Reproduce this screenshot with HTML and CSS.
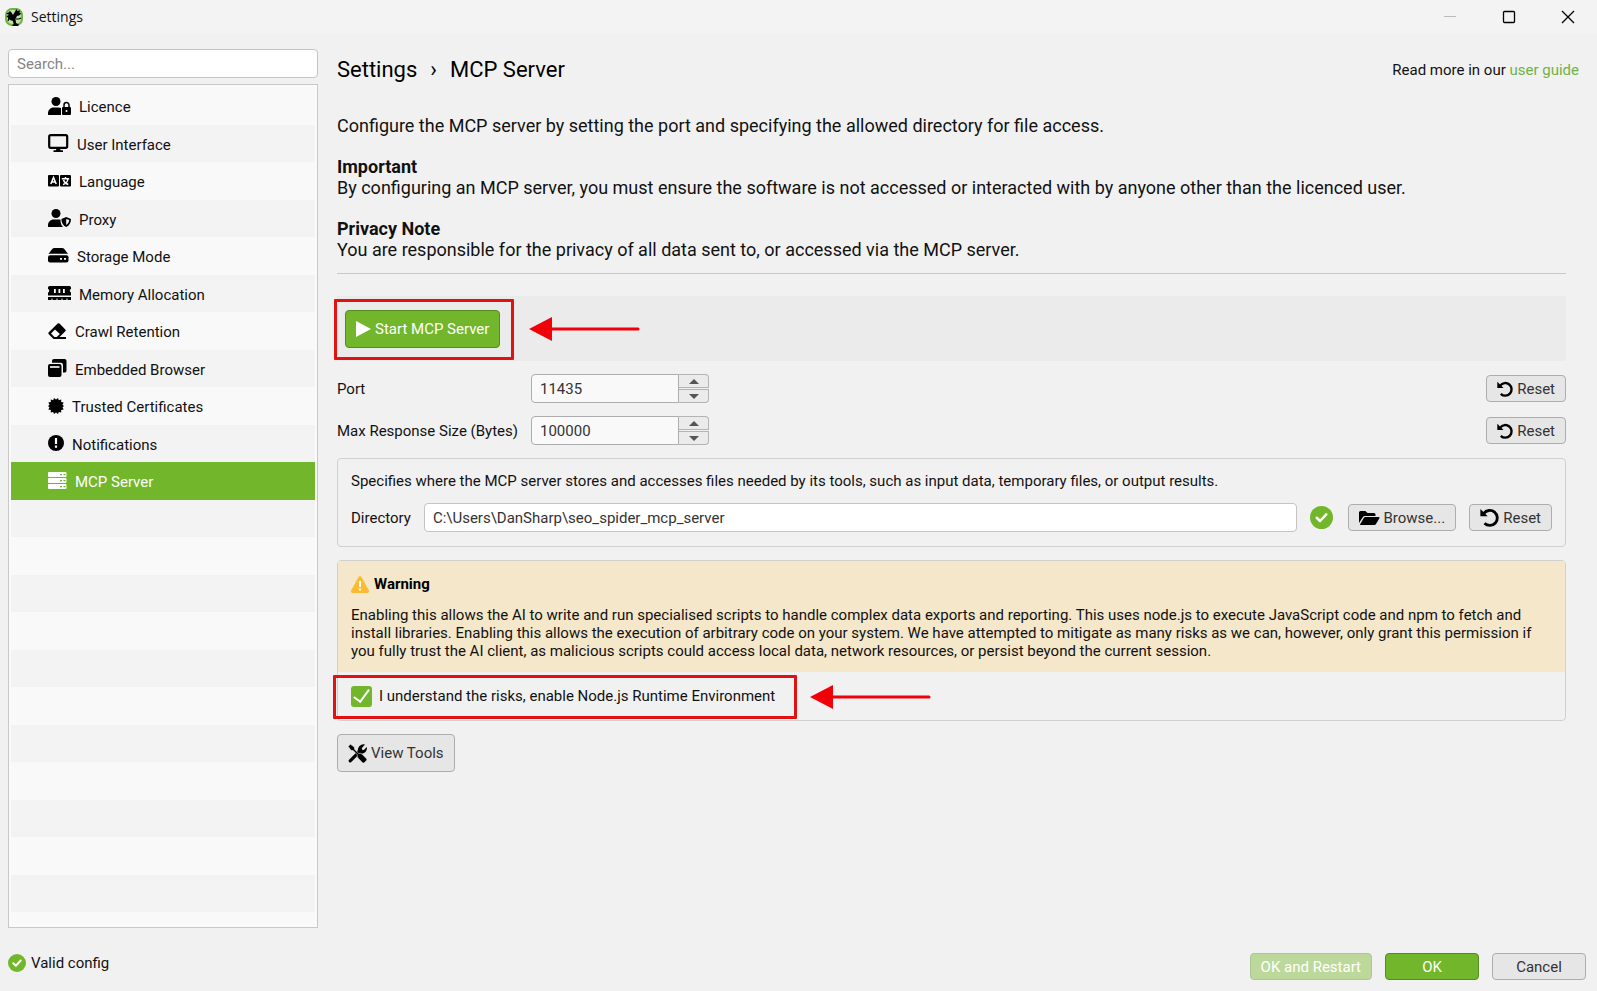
FILE: index.html
```html
<!DOCTYPE html>
<html lang="en">
<head>
  <meta charset="utf-8">
  <title>Settings</title>
  <link rel="stylesheet" href="styles.css">
</head>
<body>
  <svg class="sprite" aria-hidden="true">
    <symbol id="check" viewBox="0 0 512 512"><path fill="#72b62b" d="M256 512A256 256 0 1 0 256 0a256 256 0 1 0 0 512z"/><path fill="none" stroke="#fff" stroke-width="56" stroke-linecap="round" stroke-linejoin="round" d="M150 262l74 72L362 186"/></symbol>
    <symbol id="undo" viewBox="0 0 16 16"><path fill="none" stroke="currentColor" stroke-width="2.4" d="M3.2 4.6A6.3 6.3 0 1 1 3.8 12.8"/><path d="M.3.8v6.1h6.2z"/></symbol>
  </svg>

  <header class="titlebar">
    <svg class="app-icon" viewBox="0 0 18 18"><rect x="1" y="1" width="16" height="16" rx="6" fill="#c3dfae" stroke="#6cb33f" stroke-width="2"/><path d="M1 5.500l2.500-1L5 3l1.500 1.500L8 7l2-3.500 1.500-2.500 1 2L15 2.500l-.5 2.500 2 .5-2.500 2-2 .5-1.500 3L11 15l3 1.500-1 1.500H7l1.500-2-.5-3-3-1-2-2L1.500 8 4 7z"/><path fill="none" stroke="#000" stroke-width="1.200" d="M11 11l3 0 2-1M4 10l-1 3"/></svg>
    <span class="window-title">Settings</span>
    <div class="window-buttons">
      <button type="button" aria-label="Minimize" disabled><svg viewBox="0 0 14 14"><path stroke="#bbb" d="M1 6.500h12"/></svg></button>
      <button type="button" aria-label="Maximize"><svg viewBox="0 0 14 14"><rect x="1.500" y="1.500" width="11" height="11" rx="1" fill="none" stroke="#000" stroke-width="1.300"/></svg></button>
      <button type="button" aria-label="Close"><svg viewBox="0 0 14 14"><path stroke="#000" stroke-width="1.300" d="M1 1l12 12M13 1L1 13"/></svg></button>
    </div>
  </header>

  <div class="content">
    <aside class="sidebar">
      <input class="search" type="text" placeholder="Search..." aria-label="Search">
      <nav class="nav">
        <ul>
          <li><svg width="23" height="18" viewBox="0 0 23 18"><circle cx="8" cy="4.500" r="4.500"/><path d="M0 17.500V16c0-3 2.500-5.500 5.500-5.500h5c1 0 1.800.2 2.500.5v7H1q-1 0-1-.5z"/><rect x="14" y="10" width="9" height="8" rx="1"/><path fill="none" stroke="#000" stroke-width="1.500" d="M16 10V8a2.500 2.500 0 0 1 5 0v2"/><circle cx="18.500" cy="14" r="1" fill="#fff"/></svg>Licence</li>
          <li><svg width="21" height="18" viewBox="0 0 21 18"><rect x="1.200" y="1.200" width="18" height="12.600" rx="1.500" fill="none" stroke="#000" stroke-width="2.200"/><path d="M8.500 14h3.500l.5 2.200H15V18H5.500v-1.800H8z"/></svg>User Interface</li>
          <li><svg width="23" height="12" viewBox="0 0 23 12"><rect width="11" height="11.500" rx="1"/><rect x="12" width="11" height="11.500" rx="1"/><path fill="none" stroke="#fff" stroke-width="1.500" d="M2.800 9l2.700-6.500L8.200 9M3.800 7h3.400M13.800 3.800h7.400M17.500 2v2M15 9.500c3-1 4.500-3 4.800-5M15.500 5c.8 2.500 2.500 3.800 4.800 4.500"/></svg>Language</li>
          <li><svg width="23" height="18" viewBox="0 0 23 18"><circle cx="8" cy="4.500" r="4.500"/><path d="M0 17.500V16c0-3 2.500-5.500 5.500-5.500h5c1 0 1.500.1 2 .3 0 3 .5 5.500 2.500 7.200H1q-1 0-1-.5z"/><path fill-rule="evenodd" d="M18.200 8l4.800 1.900c0 3.500-1.500 6.600-4.800 8.100-3.300-1.500-4.800-4.600-4.800-8.100zm0 1.900v6c1.900-1.200 2.900-2.900 3-4.900z"/></svg>Proxy</li>
          <li><svg width="21" height="15" viewBox="0 0 21 15"><path d="M.5 6L4 1.300Q5 0 6.500 0h7.500q1.500 0 2.500 1.300L20 6q-.8-.3-1.500-.3H2Q1.300 5.700.5 6z"/><rect y="7.200" width="20.500" height="7.300" rx="2"/><path fill="#fff" d="M12 10h2v1.800h-2zM16 10h2v1.800h-2z"/></svg>Storage Mode</li>
          <li><svg width="23" height="14" viewBox="0 0 23 14"><path d="M1.500 0h20q1.500 0 1.500 1.500V3q-1.200.4-1.200 1.700T23 6.500v3H0v-3q1.200-.4 1.200-1.800T0 3V1.500Q0 0 1.500 0zM0 11h23v3h-3.500v-1.500h-1V14h-4v-1.500h-1V14h-4v-1.500h-1V14h-4v-1.500h-1V14H0z"/><path fill="#fff" d="M6 3h1.800v4H6zM10.500 3h1.800v4h-1.800zM15 3h1.800v4H15z"/></svg>Memory Allocation</li>
          <li><svg width="19" height="16" viewBox="0 0 19 16"><path fill-rule="evenodd" d="M9.700.6q.9-.8 1.800 0l5.800 5.800q.8.9 0 1.800L11.500 14H18v2H5.500L.8 11.300q-1-1 0-2zM7 6.500l-4 4L6.400 14h2.300l3.200-3z"/></svg>Crawl Retention</li>
          <li><svg width="19" height="18" viewBox="0 0 19 18"><path d="M6 0h10.500Q18.500 0 18.500 2v9.500q0 2-1.500 2h-2V6q0-2.300-2.300-2.300H4V2q0-2 2-2z"/><rect y="5" width="13.500" height="13" rx="2"/><path fill="#fff" d="M2 7.200h9.500v1.600H2z"/></svg>Embedded Browser</li>
          <li><svg width="16" height="16" viewBox="0 0 16 16"><path d="M8 1.500L10 0l.8 2.200 2.500-.7-.2 2.600 2.600.5-1.200 2.100L16 8l-1.500 1.300 1.200 2.200-2.600.4.200 2.700-2.500-.7L10 16l-2-1.500L6 16l-.8-2.100-2.500.7.200-2.700-2.600-.4 1.200-2.200L0 8l1.500-1.300L.3 4.600l2.600-.5-.2-2.600 2.500.7L6 0z"/></svg>Trusted Certificates</li>
          <li><svg width="16" height="16" viewBox="0 0 16 16"><circle cx="8" cy="8" r="8"/><path fill="#fff" d="M6.900 3h2.200v6H6.900zM6.900 10.500h2.200v2.200H6.900z"/></svg>Notifications</li>
          <li class="selected"><svg width="19" height="17" viewBox="0 0 19 17"><rect width="18.500" height="5" rx="1"/><rect y="6" width="18.500" height="5" rx="1"/><rect y="12" width="18.500" height="5" rx="1"/><path fill="#72b62b" d="M12 2h2v1.200h-2zM15.500 2h2v1.200h-2zM12 8h2v1.200h-2zM15.500 8h2v1.200h-2zM12 14h2v1.200h-2zM15.500 14h2v1.200h-2z"/></svg>MCP Server</li>
        </ul>
      </nav>
    </aside>

    <main class="main">
      <div class="heading">
        <h1>Settings<span class="sep">›</span>MCP Server</h1>
        <p class="guide">Read more in our <a href="#">user guide</a></p>
      </div>

      <div class="panel">
        <div class="intro">
          <p>Configure the MCP server by setting the port and specifying the allowed directory for file access.</p>
          <p><b>Important</b><br>By configuring an MCP server, you must ensure the software is not accessed or interacted with by anyone other than the licenced user.</p>
          <p><b>Privacy Note</b><br>You are responsible for the privacy of all data sent to, or accessed via the MCP server.</p>
        </div>

        <div class="start-bar">
          <button type="button" class="btn green start"><svg width="15" height="16" viewBox="0 0 15 16"><path d="M0 0l15 8-15 8z"/></svg>Start MCP Server</button>
          <div class="mark mark-start"></div>
          <svg class="arrow arrow-start" width="111" height="24" viewBox="0 0 111 24"><path d="M0 12L23 0v24z"/><path d="M20 10.500h89a1.500 1.500 0 0 1 0 3H20z"/></svg>
        </div>

        <div class="field">
          <label for="port">Port</label>
          <div class="spin">
            <input type="text" id="port" value="11435">
            <div class="steps">
              <button type="button" aria-label="Increase port"><svg viewBox="0 0 10 5"><path d="M0 5l5-5 5 5z"/></svg></button>
              <button type="button" aria-label="Decrease port"><svg viewBox="0 0 10 5"><path d="M0 0l5 5 5-5z"/></svg></button>
            </div>
          </div>
          <button type="button" class="btn"><svg width="16" height="16"><use href="#undo"/></svg>Reset</button>
        </div>
        <div class="field">
          <label for="size">Max Response Size (Bytes)</label>
          <div class="spin">
            <input type="text" id="size" value="100000">
            <div class="steps">
              <button type="button" aria-label="Increase size"><svg viewBox="0 0 10 5"><path d="M0 5l5-5 5 5z"/></svg></button>
              <button type="button" aria-label="Decrease size"><svg viewBox="0 0 10 5"><path d="M0 0l5 5 5-5z"/></svg></button>
            </div>
          </div>
          <button type="button" class="btn"><svg width="16" height="16"><use href="#undo"/></svg>Reset</button>
        </div>

        <section class="group directory">
          <p>Specifies where the MCP server stores and accesses files needed by its tools, such as input data, temporary files, or output results.</p>
          <div class="directory-row">
            <label for="directory">Directory</label>
            <input type="text" id="directory" value="C:\Users\DanSharp\seo_spider_mcp_server">
            <svg class="valid" width="23" height="23"><use href="#check"/></svg>
            <button type="button" class="btn"><svg width="21" height="14" viewBox="0 0 21 14"><path d="M0 12V1.500Q0 0 1.500 0h4.800l2.200 2H15q1.500 0 1.500 1.500V5H6Q4.500 5 3.700 6.300z"/><path d="M1 13.500L4.800 7q.5-.9 1.500-.9h13.400q1.300 0 .7 1.100L17 13q-.6 1-1.700 1H1.500Q.8 14 1 13.500z"/></svg>Browse...</button>
            <button type="button" class="btn"><svg width="19" height="19"><use href="#undo"/></svg>Reset</button>
          </div>
        </section>

        <section class="group runtime">
          <div class="warning">
            <h2><svg width="18" height="17" viewBox="0 0 18 17"><path fill="#fbbc34" d="M7.700.8q1.300-1.600 2.600 0l7.500 13.500Q18.500 17 16.500 17h-15Q-.5 17 .2 14.300z"/><path fill="#fff" d="M8 5h2v6H8zM8 12.500h2v2H8z"/></svg>Warning</h2>
            <p>Enabling this allows the AI to write and run specialised scripts to handle complex data exports and reporting. This uses node.js to execute JavaScript code and npm to fetch and install libraries. Enabling this allows the execution of arbitrary code on your system. We have attempted to mitigate as many risks as we can, however, only grant this permission if you fully trust the AI client, as malicious scripts could access local data, network resources, or persist beyond the current session.</p>
          </div>
          <div class="consent">
            <input type="checkbox" id="consent" checked>
            <label for="consent">I understand the risks, enable Node.js Runtime Environment</label>
            <div class="mark mark-consent"></div>
            <svg class="arrow arrow-consent" width="121" height="24" viewBox="0 0 121 24"><path d="M0 12L23 0v24z"/><path d="M20 10.500h99a1.500 1.500 0 0 1 0 3H20z"/></svg>
          </div>
        </section>

        <button type="button" class="btn tools"><svg width="19" height="19" viewBox="0 0 19 19"><path fill="none" stroke="#000" stroke-width="3.200" stroke-linecap="round" d="M2.200 16.800l8.500-8.500"/><path d="M10 9.500Q8.700 5 11.500 2 14-.3 17 .6L13.800 4l.3 1.800 1.700.2L18.800 3q.7 2.700-1.300 4.900-2.500 2.300-5.200 1.600z"/><path stroke="#e6e6e6" stroke-width=".6" d="M.2 2.400L2.400.2l3.900 2.900.2 2.200 4.300 4.200q1.900-.7 3.400.8l4.100 4.200q1.100 1.100 0 2.200l-1.800 1.800q-1.100 1-2.200 0l-4.100-4.200q-1.500-1.500-.8-3.400L5.200 6.600 3 6.300z"/></svg>View Tools</button>
      </div>
    </main>
  </div>

  <footer class="footer">
    <div class="status"><svg width="18" height="18"><use href="#check"/></svg>Valid config</div>
    <button type="button" class="btn green restart" disabled>OK and Restart</button>
    <button type="button" class="btn green wide">OK</button>
    <button type="button" class="btn wide">Cancel</button>
  </footer>
</body>
</html>
```
FILE: styles.css
```css
* {
  box-sizing: border-box;
}

body {
  margin: 0;
  min-height: 100vh;
  display: flex;
  flex-direction: column;
  background-color: #f1f1f1;
  color: #111;
  font-family: Roboto, "Liberation Sans", sans-serif;
  font-size: 15px;
  line-height: 18px;
}

h1, h2, p, ul {
  margin: 0;
  padding: 0;
}

h1, h2 {
  font-weight: normal;
}

input, button {
  font: inherit;
}

svg {
  flex: none;
}

.sprite {
  position: absolute;
  width: 0;
  height: 0;
}

/* title bar */
.titlebar {
  display: flex;
  align-items: center;
  height: 34px;
  padding-left: 5px;
  background-color: #f3f3f3;
}

.app-icon {
  width: 18px;
  height: 18px;
}

.window-title {
  flex: 1;
  margin-left: 8px;
  font-family: "Open Sans", "Noto Sans", sans-serif;
  font-size: 14px;
  line-height: 20px;
}

.window-buttons {
  display: flex;
}

.window-buttons button {
  display: flex;
  align-items: center;
  justify-content: center;
  width: 59px;
  height: 34px;
  padding: 0;
  border: none;
  background: none;
}

.window-buttons svg {
  width: 14px;
  height: 14px;
}

/* layout */
.content {
  flex: 1;
  display: flex;
  padding: 15px 0 0 8px;
}

.sidebar {
  flex: none;
  display: flex;
  flex-direction: column;
  width: 310px;
}

.search {
  height: 29px;
  padding: 0 8px;
  border: 1px solid #c4c4c4;
  border-radius: 4px;
  background-color: #fff;
}

.search::placeholder {
  color: #858585;
}

.nav {
  flex: 1;
  display: flex;
  margin-top: 6px;
  padding: 2px;
  border: 1px solid #c8c8c8;
  background-color: #fafafa;
}

.nav ul {
  flex: 1;
  list-style: none;
  background: repeating-linear-gradient(#f9f9f9 0 38px, #f3f3f3 38px 75px);
}

.nav li {
  display: flex;
  align-items: center;
  gap: 8px;
  height: 37px;
  padding: 2px 0 0 37px;
}

.nav li:nth-child(odd) {
  height: 38px;
}

.nav li svg {
  margin-bottom: 3px;
}

.nav .selected {
  background-color: #72b62b;
  color: #fff;
  fill: #fff;
}

.main {
  flex: 1;
  padding: 0 18px 0 19px;
}

.heading {
  display: flex;
  align-items: center;
  justify-content: space-between;
  height: 42px;
}

.heading h1 {
  color: #000;
  font-size: 22px;
  line-height: 28px;
}

.sep {
  margin: 0 13px;
}

a {
  color: #72b143;
  text-decoration: none;
}

.panel {
  padding-right: 13px;
}

.intro {
  padding: 24px 0 13px;
  border-bottom: 1px solid #c8c8c8;
  font-size: 18px;
  line-height: 21px;
}

.intro p + p {
  margin-top: 20px;
}

/* buttons */
.btn {
  display: flex;
  align-items: center;
  justify-content: center;
  gap: 4px;
  height: 27px;
  padding: 0 10px;
  border: 1px solid #adadad;
  border-radius: 4px;
  background-color: #e6e6e6;
  color: #333;
}

.btn svg {
  color: #000;
}

.btn.green {
  border-color: #558b21;
  background-color: #72b62b;
  color: #fff;
}

.green svg {
  fill: #fff;
}

.start-bar {
  position: relative;
  display: flex;
  align-items: center;
  height: 65px;
  margin-top: 22px;
  padding-left: 8px;
  background-color: #ebebeb;
}

.start {
  height: 38px;
}

/* red call-outs drawn over the page */
.mark {
  position: absolute;
  border: 3px solid #e01212;
  border-radius: 1px;
}

.mark-start {
  left: -3px;
  top: 3px;
  width: 180px;
  height: 61px;
}

.mark-consent {
  left: -5px;
  top: 3px;
  width: 464px;
  height: 44px;
}

.arrow {
  position: absolute;
  fill: #f00008;
}

.arrow-start {
  left: 192px;
  top: 21px;
}

.arrow-consent {
  left: 472px;
  top: 13px;
}

/* number fields */
.field {
  display: flex;
  align-items: center;
  margin-top: 13px;
}

.field label {
  width: 194px;
}

.spin {
  display: flex;
  width: 178px;
  height: 29px;
  margin-right: auto;
}

.spin input {
  flex: 1;
  min-width: 0;
  padding: 0 8px;
  border: 1px solid #adadad;
  border-radius: 4px 0 0 4px;
  background-color: #f9f9f9;
  color: #333;
}

.steps {
  display: flex;
  flex-direction: column;
  gap: 1px;
  width: 30px;
}

.steps button {
  flex: 1;
  display: flex;
  align-items: center;
  justify-content: center;
  padding: 0;
  border: 1px solid #b4b4b4;
  border-left: none;
  background-color: #ebebeb;
}

.steps button:first-child {
  border-top-right-radius: 4px;
}

.steps button:last-child {
  border-bottom-right-radius: 4px;
}

.steps svg {
  width: 10px;
  height: 5px;
  fill: #555;
}

/* boxes */
.group {
  margin-top: 13px;
  border: 1px solid #d0d0d0;
  border-radius: 4px;
}

.directory {
  padding: 13px 13px 14px;
}

.directory-row {
  display: flex;
  align-items: center;
  gap: 13px;
  margin-top: 13px;
}

.directory-row input {
  flex: 1;
  height: 29px;
  padding: 0 8px;
  border: 1px solid #c4c4c4;
  border-radius: 4px;
  background-color: #fff;
  color: #333;
}

.valid {
  margin-right: 2px;
}

.warning {
  padding: 14px 13px 12px;
  background-color: #f5e7c9;
}

.warning h2 {
  display: flex;
  align-items: center;
  gap: 5px;
  color: #000;
  font-size: 15px;
  font-weight: bold;
}

.warning p {
  margin-top: 13px;
}

.consent {
  position: relative;
  display: flex;
  align-items: center;
  gap: 7px;
  height: 48px;
  padding: 0 13px;
}

.consent input {
  appearance: none;
  width: 21px;
  height: 21px;
  margin: 0;
  border-radius: 3px;
  background-color: #72b62b;
  display: flex;
  align-items: center;
  justify-content: center;
}

.consent input::before {
  content: "";
  width: 7px;
  height: 14px;
  margin-bottom: 4px;
  border: solid #fff;
  border-width: 0 2px 2px 0;
  transform: rotate(36deg);
}

.tools {
  height: 38px;
  margin-top: 13px;
}

/* footer */
.footer {
  display: flex;
  align-items: center;
  gap: 13px;
  padding: 25px 11px 11px 8px;
}

.status {
  display: flex;
  align-items: center;
  gap: 5px;
  height: 27px;
  margin-right: auto;
  padding-bottom: 8px;
}

.wide {
  width: 94px;
}

.btn.restart {
  border-color: #aec595;
  background-color: #bcd99b;
}
```
